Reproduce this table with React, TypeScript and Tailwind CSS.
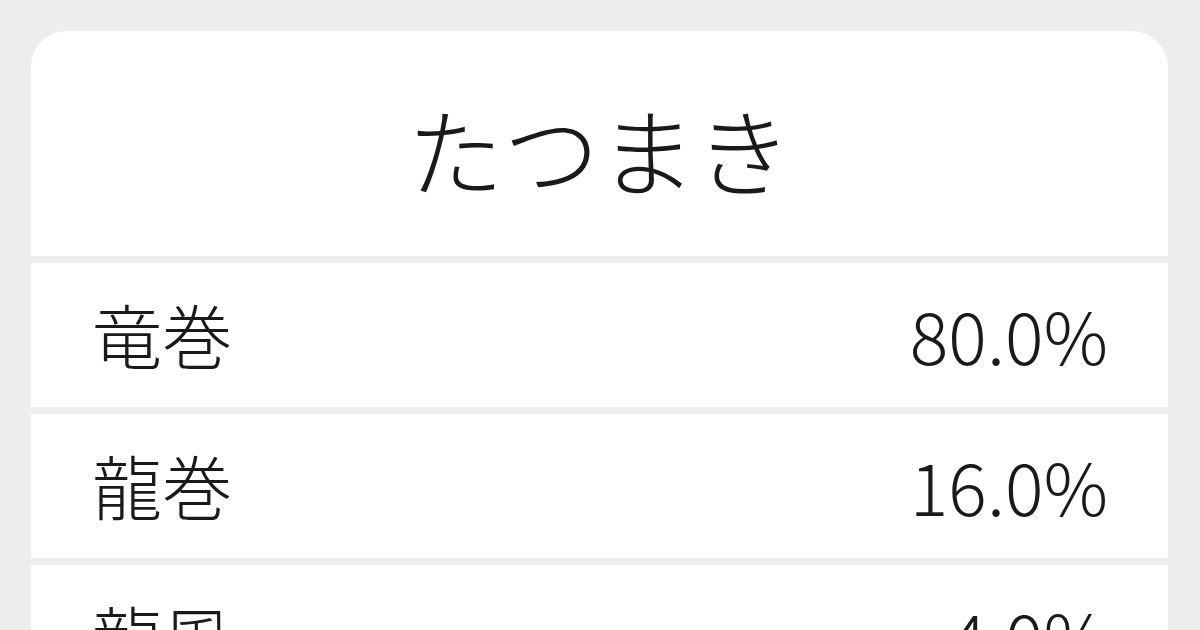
const rows = [
  { word: '竜巻', rate: '80.0%' },
  { word: '龍巻', rate: '16.0%' },
  { word: '龍風', rate: '4.0%' },
]

export default function App() {
  return (
    <main
      className="w-[1200px] h-[630px] overflow-hidden bg-[#ededed] pt-[31px] pl-[31px]"
      style={{ fontFamily: '"Noto Sans CJK JP", "Noto Sans", sans-serif' }}
    >
      <div className="w-[1137px] flex flex-col gap-[7px] rounded-t-[36px] overflow-hidden">
        {/* 見出し */}
        <div className="h-[225px] bg-white flex items-center justify-center pt-[8px]">
          <h1 className="text-[96px] leading-none font-light text-[#1a1a1a]">たつまき</h1>
        </div>

        {/* 表記ごとの割合 */}
        {rows.map((row) => (
          <div
            key={row.word}
            className="h-[144px] shrink-0 bg-white flex items-center justify-between pl-[61px] pr-[60px] pb-[3px]"
          >
            <span className="text-[70px] leading-none font-light text-[#1a1a1a]">{row.word}</span>
            <span className="text-[72px] leading-none font-light text-[#1a1a1a]">{row.rate}</span>
          </div>
        ))}
      </div>
    </main>
  )
}
